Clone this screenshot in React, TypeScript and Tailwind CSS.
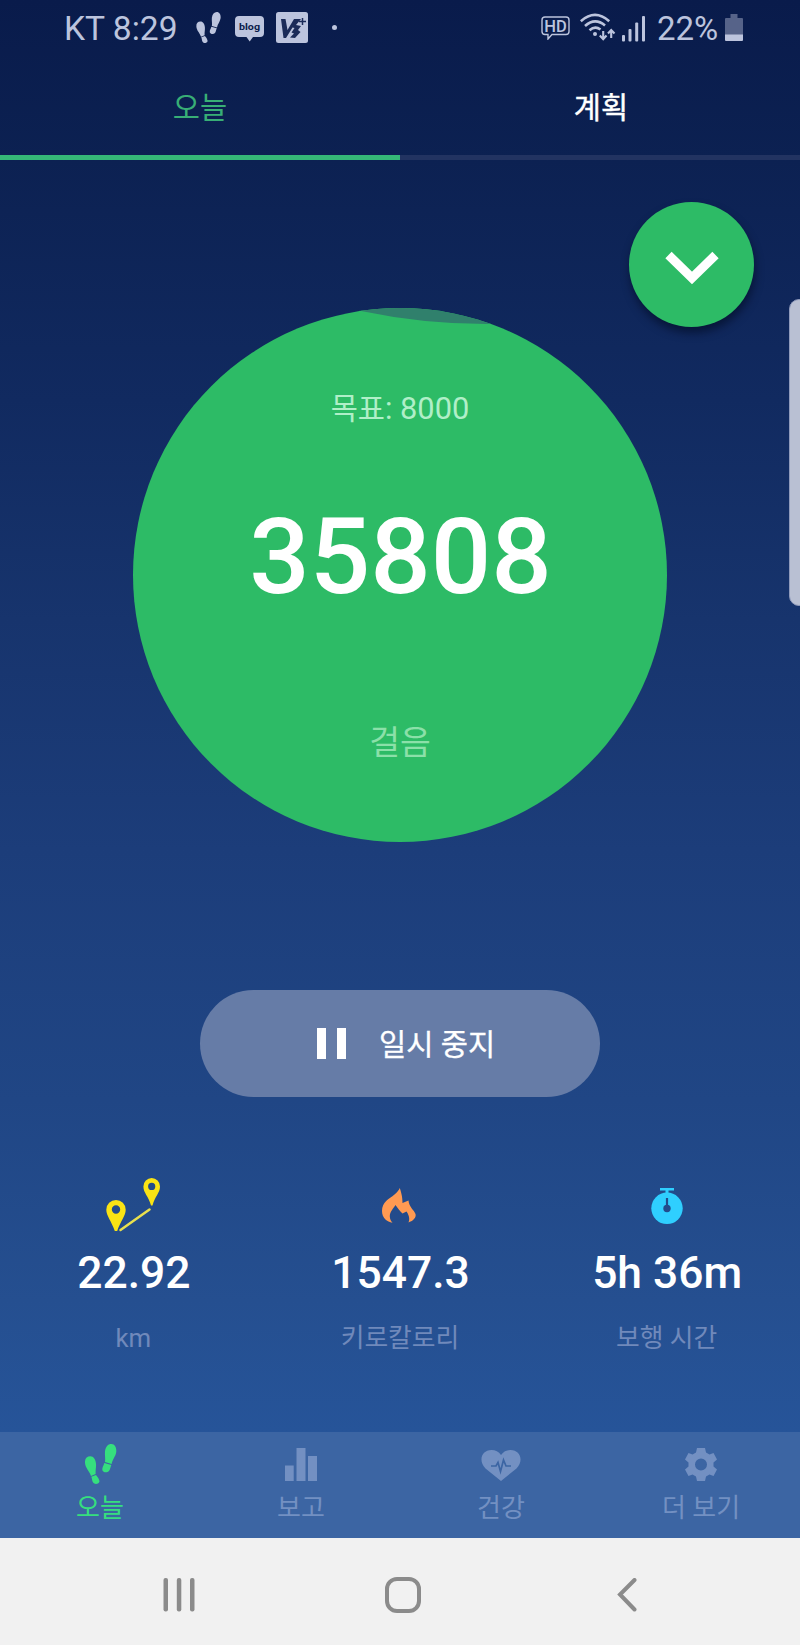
import type { ReactNode } from "react";

function Footprints({ className }: { className: string }) {
  return (
    <svg viewBox="0 0 94 120" className={className} fill="currentColor" aria-hidden="true">
      <path d="M16 37C26 37 32 47 33 59C34 70 31 78 32 90L18 96C14 82 1 72 0 56C-1 44 6 37 16 37Z" />
      <path d="M19 98L33 93C38 99 45 108 43 114C40 121 28 122 24 115C21 111 22 105 19 98Z" />
      <path d="M79 0C89 0 95 10 94 23C92 38 82 46 80 60L60 54C62 44 59 36 60 22C62 8 69 0 79 0Z" />
      <path d="M58 57L79 63C76 70 76 76 72 81C67 87 54 86 52 78C51 71 56 65 58 57Z" />
    </svg>
  );
}

function StatusBar() {
  return (
    <header className="flex h-[60px] items-start text-[#bcc4dd]">
      <span className="ml-[64px] mt-[9px] w-[132px] whitespace-nowrap text-[33.6px] leading-[40px]">KT 8:29</span>
      <Footprints className="mt-[12px] h-[31px] w-[25px]" />
      <svg viewBox="0 0 29 26" className="ml-[14px] mt-[16px] h-[26px] w-[29px]">
        <path d="M4 0H25Q29 0 29 4V17Q29 21 25 21H18L14.700 25.500L11.500 21H4Q0 21 0 17V4Q0 0 4 0Z" fill="currentColor" />
        <text x="14.500" y="13.500" textAnchor="middle" fontSize="9.500" fontWeight="700" fontFamily="Roboto, sans-serif" fill="#0a1c4b" textLength="21" lengthAdjust="spacingAndGlyphs">blog</text>
      </svg>
      <svg viewBox="0 0 32 31" className="ml-[12px] mt-[12px] h-[31px] w-[32px]">
        <rect width="32" height="31" rx="2.500" fill="currentColor" />
        <path d="M5 7H9.500L11.500 18L18 7H25L20 13L25 14L22 18L24.500 20L19 26L14 25.500L18 21.500L15.500 20.500L18.500 16L16.500 15.500L10 26H7.500Z" fill="#1b2b58" />
        <path d="M26.500 6V13M23 9.500H30" stroke="#1b2b58" strokeWidth="1.500" />
      </svg>
      <span className="ml-[24px] mt-[25px] size-[5px] rounded-full bg-current" />
      <svg viewBox="0 0 29 24" className="ml-[204px] mt-[16px] h-[24px] w-[29px]">
        <path d="M4 1H25Q28 1 28 4V15.500Q28 18.500 25 18.500H11L7 23V18.500H4Q1 18.500 1 15.500V4Q1 1 4 1Z" fill="none" stroke="currentColor" strokeWidth="1.400" />
        <text x="14.500" y="15.700" textAnchor="middle" fontSize="16.500" fontWeight="500" fontFamily="Roboto, sans-serif" fill="currentColor">HD</text>
      </svg>
      <svg viewBox="0 0 36 28" className="ml-[10px] mt-[13px] h-[28px] w-[36px]" fill="none" stroke="currentColor" strokeWidth="2.600">
        <path d="M.8 8.200Q15 -4.500 29.200 8.200M5 13Q15 4 25 12.500M9.500 17.300Q15 12.500 20.500 16.500" />
        <circle cx="15" cy="21" r="2" fill="currentColor" stroke="none" />
        <path d="M23.200 18V26M19.800 22.500L23.200 26.200L26.500 22.500M31.200 25V17.500M28 20.500L31.200 17L34.500 20.500" strokeWidth="2.100" />
      </svg>
      <svg viewBox="0 0 24 26" className="ml-[6px] mt-[16px] h-[26px] w-[24px]" fill="currentColor">
        <rect x="0" y="19" width="3" height="6.500" rx="1" />
        <rect x="6.500" y="13" width="3" height="12.500" rx="1" />
        <rect x="13.200" y="6.500" width="3" height="19" rx="1" />
        <rect x="20" y="0" width="3" height="25.500" rx="1" />
      </svg>
      <span className="ml-[11px] mt-[9px] w-[68px] whitespace-nowrap text-[33px] leading-[40px]">22%</span>
      <svg viewBox="0 0 18 27" className="mt-[14px] h-[27px] w-[18px]">
        <path d="M5.500 0H12.500V4H17Q18 4 18 5V21H0V5Q0 4 1 4H5.500Z" fill="#566389" />
        <path d="M0 20.500H18V26Q18 27 17 27H1Q0 27 0 26Z" fill="currentColor" />
      </svg>
    </header>
  );
}

function Tabs() {
  return (
    <nav className="grid h-[100px] grid-cols-2 text-center text-[29.5px] leading-[97px]">
      <div className="h-[100px] border-b-[5px] border-[#35b877] text-[#38ae76]">오늘</div>
      <div className="h-[100px] border-b-[5px] border-[#223361] pl-[2px] text-white [-webkit-text-stroke:0.4px_white]">계획</div>
    </nav>
  );
}

function StepCircle() {
  return (
    <section className="relative mt-[148px] flex size-[534px] shrink-0 flex-col items-center overflow-hidden rounded-full bg-[#2dbb66]">
      <svg viewBox="0 0 534 20" className="absolute left-0 top-0 h-[20px] w-[534px]">
        <path d="M228 3Q290 16 353 16H400V0H228Z" fill="#30806c" />
      </svg>
      <p className="mt-[81px] whitespace-nowrap text-[29.5px] leading-[40px] text-[#b0efc8]">
        목표<span className="text-[30.8px]">: 8000</span>
      </p>
      <p className="mt-[68px] pl-px text-[106.5px] font-medium leading-[120px] text-white">35808</p>
      <p className="mt-[101px] text-[33.5px] leading-[50px] text-[#8be0a9]">걸음</p>
    </section>
  );
}

function RouteIcon() {
  return (
    <svg viewBox="0 0 54 54" className="h-[54px] w-[54px]" fill="#fae314">
      <path fillRule="evenodd" d="M10 22A9.700 9.700 0 0 1 19.700 31.700C19.700 38 14.500 43 11.200 53H8.800C5.500 43 .3 38 .3 31.700A9.700 9.700 0 0 1 10 22ZM10 27.300A4.200 4.200 0 1 0 10 35.700A4.200 4.200 0 1 0 10 27.300Z" />
      <path fillRule="evenodd" d="M45.700 0A8.500 8.500 0 0 1 54 8.500C54 15 49 18 46.500 27.500H45C42.500 18 37.400 15 37.400 8.500A8.500 8.500 0 0 1 45.700 0ZM45.700 4.800A3.600 3.600 0 1 0 45.700 12A3.600 3.600 0 1 0 45.700 4.800Z" />
      <path d="M14.500 52L43.500 31.500" stroke="#e9e04d" strokeWidth="2.500" strokeLinecap="round" />
    </svg>
  );
}

function FlameIcon() {
  return (
    <svg viewBox="0 0 34 36" className="-ml-[2px] mt-[10px] h-[36px] w-[34px]" fill="#ff9a52">
      <path d="M17.800 0C19 4 20.500 8 20.500 15L26.500 12.500C27 19 32 22 33.500 26C34.500 30 31 33 26.500 34.500C28 31 27 27 24.500 23.500L20.500 25.500C18 23.500 16 20.500 13.500 17C11.500 20 7.800 24 7.800 28C7.700 31 9 33 10.500 34.800C5 34 0 30 0 23C0 14 7 11 12.500 6.500C15.500 4 17 2 17.800 0Z" />
    </svg>
  );
}

function StopwatchIcon() {
  return (
    <svg viewBox="0 0 32 36" className="mt-[10px] h-[36px] w-[32px]">
      <path d="M9 0H23V2.500H17.500V7H14.500V2.500H9Z" fill="#2fcfff" />
      <circle cx="16" cy="20.300" r="15.700" fill="#2fcfff" />
      <circle cx="16" cy="20.500" r="3.700" fill="#234c8c" />
      <path d="M16 10V20" stroke="#234c8c" strokeWidth="2.200" />
    </svg>
  );
}

function Stat({ icon, value, children }: { icon: ReactNode; value: string; children: ReactNode }) {
  return (
    <div className="flex flex-col items-center">
      <div className="flex h-[65px] items-start">{icon}</div>
      <p className="whitespace-nowrap pl-px text-[44.4px] font-medium leading-[60px] text-white">{value}</p>
      <p className="mt-[15px] whitespace-nowrap text-[25.8px] leading-[40px] text-[#7089bb]">{children}</p>
    </div>
  );
}

function NavItem({ icon, label, className }: { icon: ReactNode; label: string; className: string }) {
  return (
    <div className={className}>
      <div className="flex h-[58px] items-start">{icon}</div>
      <span className="whitespace-nowrap text-[26px] leading-[37px]">{label}</span>
    </div>
  );
}

function BottomNav() {
  const idle = "flex flex-col items-center pl-[2px] text-[#7390c2]";
  return (
    <nav className="grid h-[106px] shrink-0 grid-cols-4 bg-[#3c65a3]">
      <NavItem
        className="flex flex-col items-center text-[#36df7e]"
        label="오늘"
        icon={<Footprints className="ml-[2px] mt-[12px] h-[40px] w-[31.300px]" />}
      />
      <NavItem
        className={idle}
        label="보고"
        icon={
          <svg viewBox="0 0 32 33" className="mt-[16px] h-[33px] w-[32px]" fill="currentColor">
            <path d="M0 17.500H8.700V33H0ZM11.500 0H20.500V33H11.500ZM23 8H32V33H23Z" />
          </svg>
        }
      />
      <NavItem
        className={idle}
        label="건강"
        icon={
          <svg viewBox="0 0 40 31" className="mt-[18px] h-[31px] w-[40px]">
            <path d="M20 31L4.500 18.500C-3 11 .5 0 10.500 0Q16.500 0 20 5Q23.500 0 29.500 0C39.500 0 43 11 35.500 18.500Z" fill="currentColor" />
            <path d="M10 16H15L17 12.500L19.500 21.500L22.500 10L25 16H30" fill="none" stroke="#3c65a3" strokeWidth="1.700" />
          </svg>
        }
      />
      <NavItem
        className={idle}
        label="더 보기"
        icon={
          <svg viewBox="0 0 32 33" className="mt-[16px] h-[33px] w-[32px]" fill="currentColor">
            <path fillRule="evenodd" d="M12 0H20L21 4.500L24.500 6.500L28.500 5L32 11.500L28.500 14.500V18.500L32 21.500L28.500 28L24.500 26.500L21 28.500L20 33H12L11 28.500L7.500 26.500L3.500 28L0 21.500L3.500 18.500V14.500L0 11.500L3.500 5L7.500 6.500L11 4.500ZM16 10.500A6 6 0 1 0 16 22.500A6 6 0 1 0 16 10.500Z" />
          </svg>
        }
      />
    </nav>
  );
}

function SystemNav() {
  return (
    <footer className="flex h-[107px] shrink-0 items-start bg-[#f1f1f1] text-[#8b8b8b]">
      <svg viewBox="0 0 32 34" className="ml-[163px] mt-[40px] h-[34px] w-[32px]" fill="currentColor">
        <rect x="0.500" width="4.500" height="33.500" rx="2" />
        <rect x="13.800" width="4.500" height="33.500" rx="2" />
        <rect x="27" width="4.500" height="33.500" rx="2" />
      </svg>
      <span className="ml-[190px] mt-[39px] h-[36px] w-[36px] rounded-[12px] border-[4px] border-current" />
      <svg viewBox="0 0 20 34" className="ml-[196px] mt-[40px] h-[34px] w-[20px]" fill="none" stroke="currentColor" strokeWidth="4" strokeLinecap="round">
        <path d="M17.500 2L3 16.500L17.500 31.500" />
      </svg>
    </footer>
  );
}

export default function App() {
  return (
    <div className="relative flex h-[1645px] w-[800px] flex-col overflow-hidden bg-[#265499] font-['Roboto','Noto_Sans_CJK_KR',sans-serif]" lang="ko">
      <div className="flex h-[1432px] shrink-0 flex-col bg-linear-[180deg,#091b4b_0px,#0c2152_160px,#112a60_400px,#17346d_620px,#1c3d7a_850px,#204685_1100px,#254f90_1300px,#265499_1432px]">
        <StatusBar />
        <Tabs />
        <main className="flex flex-col items-center">
          <StepCircle />
          <button className="mt-[148px] flex h-[107px] w-[400px] items-center rounded-full bg-[#667ca7] pl-[117px] text-white">
            <span className="flex gap-[11px]">
              <span className="h-[31px] w-[9px] bg-white" />
              <span className="h-[31px] w-[9px] bg-white" />
            </span>
            <span className="ml-[33px] mt-[2px] whitespace-nowrap text-[29.6px] leading-[40px] [-webkit-text-stroke:0.3px_white]">일시 중지</span>
          </button>
          <section className="mt-[81px] grid w-full grid-cols-3">
            <Stat icon={<RouteIcon />} value="22.92">km</Stat>
            <Stat icon={<FlameIcon />} value="1547.3">키로칼로리</Stat>
            <Stat icon={<StopwatchIcon />} value="5h 36m">보행 시간</Stat>
          </section>
        </main>
      </div>
      <BottomNav />
      <SystemNav />
      <button className="absolute left-[629px] top-[202px] flex size-[125px] items-center justify-center rounded-full bg-[#2dbb66] shadow-[1px_6px_9px_rgba(0,10,30,0.55)]">
        <svg viewBox="0 0 54 34" className="mt-[6px] h-[34px] w-[54px]" fill="none" stroke="white" strokeWidth="9">
          <path d="M3.500 4L27 27L50.500 4" />
        </svg>
      </button>
      <span className="absolute left-[789px] top-[299px] h-[307px] w-[20px] rounded-[10px] border border-[#8f9abb] bg-[#b9c0d3]" />
    </div>
  );
}
